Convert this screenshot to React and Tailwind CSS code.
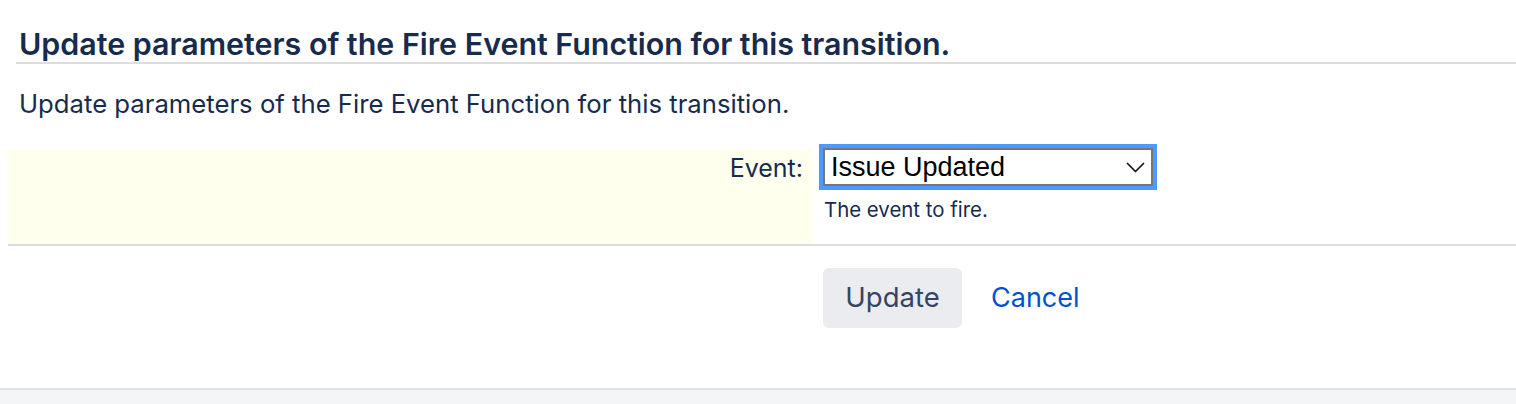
const App = () => {
  return (
    <div className="h-[404px] bg-white flex flex-col font-['Inter','Liberation_Sans',sans-serif] text-[#172b4d]">
      <div className="pl-4 pt-[26px]">
        <h2 className="pl-[3px] text-[30.4px] leading-[36px] font-semibold border-b-2 border-[#dddddd]">
          Update parameters of the Fire Event Function for this transition.
        </h2>
      </div>
      <p className="pl-[19px] mt-[25px] text-[25.7px] leading-[30px]">
        Update parameters of the Fire Event Function for this transition.
      </p>
      <div className="ml-2 mt-[30px] grid grid-cols-[805px_1fr] border-b-2 border-[#dddddd]">
        <div className="bg-[#ffffee] h-[95px] flex justify-end pr-[10px] pt-[4px]">
          <label className="text-[25px] leading-[30px]">Event:</label>
        </div>
        <div className="pl-[6px] -mt-[5px]">
          <div className="w-[338px] h-[46px] border-4 border-[#4c9aff]">
            <div className="h-full border-2 border-[#767676] bg-white flex items-center justify-between pl-[6px] pr-[6px]">
              <span className="text-[27px] leading-[30px] text-black font-['Liberation_Sans',sans-serif]">Issue Updated</span>
              <svg width="19" height="11" viewBox="0 0 19 11" fill="none" stroke="#111" strokeWidth="1.7" strokeLinecap="round" strokeLinejoin="round">
                <path d="M1.5 1.5 L9.5 9.5 L17.5 1.5" />
              </svg>
            </div>
          </div>
          <p className="mt-[8px] pl-[5px] text-[20.4px] leading-[24px]">The event to fire.</p>
        </div>
      </div>
      <div className="ml-2 grid grid-cols-[805px_1fr] pt-[22px]">
        <div />
        <div className="flex items-center pl-[10px] gap-[29px]">
          <button className="h-[60px] w-[139px] rounded-md bg-[#ebecf0] text-[27.5px] text-[#344563]">Update</button>
          <a href="#" className="text-[27px] text-[#0052cc]">Cancel</a>
        </div>
      </div>
      <div className="flex-1" />
      <div className="h-[16px] border-t-2 border-[#dfe1e6] bg-[#f4f5f7]" />
    </div>
  );
};

export default App;
